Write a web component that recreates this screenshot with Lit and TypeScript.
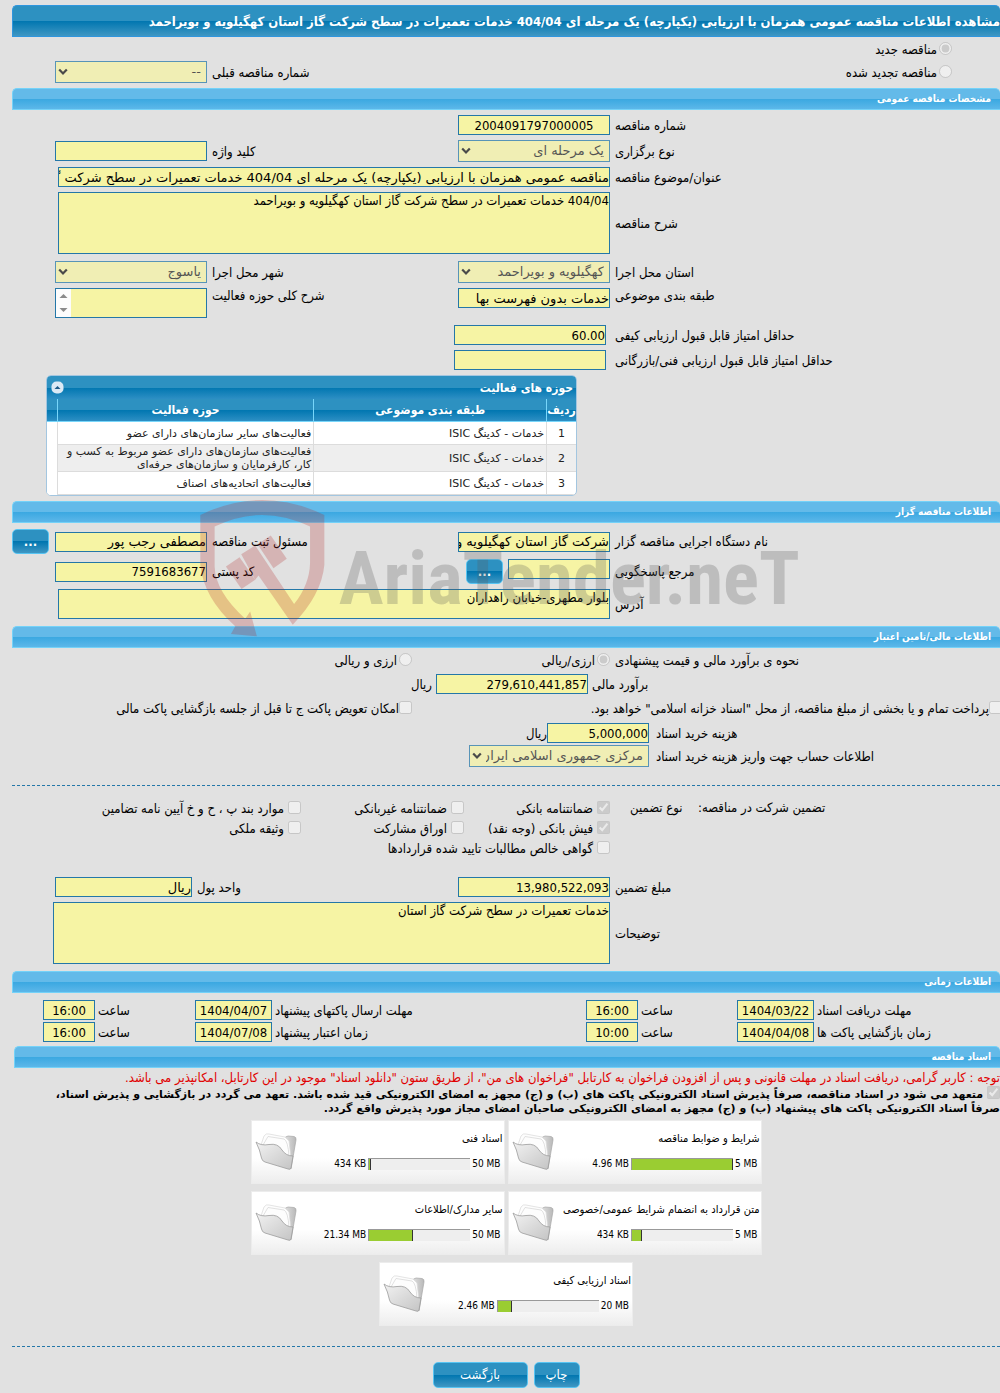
import { LitElement, html, svg, css, nothing } from "lit";
import { customElement } from "lit/decorators.js";

interface FileCard {
  title: string;
  used: string;
  limit: string;
  percent: number;
}

const FILES: FileCard[] = [
  { title: "شرایط و ضوابط مناقصه", used: "4.96 MB", limit: "5 MB", percent: 100 },
  { title: "اسناد فنی", used: "434 KB", limit: "50 MB", percent: 2 },
  { title: "متن قرارداد به انضمام شرایط عمومی/خصوصی", used: "434 KB", limit: "5 MB", percent: 10 },
  { title: "سایر مدارک/اطلاعات", used: "21.34 MB", limit: "50 MB", percent: 43 },
  { title: "اسناد ارزیابی کیفی", used: "2.46 MB", limit: "20 MB", percent: 14 },
];

const ACTIVITIES = [
  { group: "خدمات - کدینگ ISIC", name: "فعالیت‌های سایر سازمان‌های دارای عضو" },
  {
    group: "خدمات - کدینگ ISIC",
    name: "فعالیت‌های سازمان‌های دارای عضو مربوط به کسب و کار، کارفرمایان و سازمان‌های حرفه‌ای",
  },
  { group: "خدمات - کدینگ ISIC", name: "فعالیت‌های اتحادیه‌های اصناف" },
];

const DATES = [
  [
    { id: "doc", label: "مهلت دریافت اسناد", date: "1404/03/22", hour: "16:00" },
    { id: "send", label: "مهلت ارسال پاکتهای پیشنهاد", date: "1404/04/07", hour: "16:00" },
  ],
  [
    { id: "open", label: "زمان بازگشایی پاکت ها", date: "1404/04/08", hour: "10:00" },
    { id: "valid", label: "زمان اعتبار پیشنهاد", date: "1404/07/08", hour: "16:00" },
  ],
];

const folder = svg`
  <svg class="folder" viewBox="0 0 42 40" aria-hidden="true">
    <defs>
      <linearGradient id="front" x1="0" y1="0" x2="1" y2="1">
        <stop offset="0" stop-color="#f2f2f2" /><stop offset="1" stop-color="#c4c4c4" />
      </linearGradient>
      <linearGradient id="back" x1="0" y1="0" x2="1" y2="0">
        <stop offset="0" stop-color="#e6e6e6" /><stop offset="1" stop-color="#b8b8b8" />
      </linearGradient>
    </defs>
    <path d="M28 9 Q30 4 33 4 L39 4.500 Q41.500 5 41 8 L36 37 L30 33 Z" fill="url(#back)" stroke="#a8a8a8" stroke-width=".7" />
    <path d="M6 13 L9 4 Q11 1 14 2 L30 5 L34 9 L36 26 L20 24 Z" fill="#fdfdfd" stroke="#d8d8d8" stroke-width=".7" />
    <path d="M8 13 L13 4.500 L29 7 Q33 9 34 24" fill="none" stroke="#d4d4d4" stroke-width=".7" />
    <path d="M1 10 Q6 14 14 12.500 Q23 11 27 18 Q31 24 38 24 L36 36 Q35.500 38 33 37 L10 30 Q7 29 6.500 26 Q5 18 1 10 Z" fill="url(#front)" stroke="#9c9c9c" stroke-width=".8" />
  </svg>`;

@customElement("app-root")
export class AppRoot extends LitElement {
  static styles = css`
    :host {
      display: block;
      overflow: hidden;
      background: #e1e1e1;
      color: #000;
      font-family: "DejaVu Sans Condensed", "DejaVu Sans", sans-serif;
      font-size: 13px;
      line-height: 14px;
    }
    * { box-sizing: border-box; }
    .page { padding: 5px 0 5px 12px; }
    h1, h2, h3, p { margin: 0; }

    .title {
      height: 32px;
      padding-top: 8px;
      border: 1px solid #2f96de;
      border-width: 1px 0 1px 1px;
      border-radius: 5px 5px 0 0;
      background: linear-gradient(#2d91c1 0 50%, #0076b0 50%, #3f97c3);
      color: #fff;
      font-size: 13px;
      line-height: 16px;
      white-space: nowrap;
    }
    .bar {
      height: 22px;
      margin-top: 7px;
      padding: 3px 9px 0;
      border: 1px solid #74d2f8;
      border-width: 1px 0 1px 1px;
      border-radius: 5px 5px 0 0;
      background: linear-gradient(#63bae9 0 50%, #3aa8e1 50%, #5cb7e9);
      color: #fff;
      font-size: 10px;
      line-height: 14px;
    }
    .bar.tight { margin-top: 5px; }
    .bar.inset { margin: 4px 0 0 2px; }

    .stack { display: flex; flex-direction: column; gap: 5px; padding-top: 5px; }
    .head { gap: 4px; }
    .row {
      display: grid;
      grid-template-columns: 385fr 152px 241fr 152px 38fr;
      column-gap: 5px;
      align-items: center;
    }
    .row.top { align-items: start; }
    .lbl { text-align: end; padding-top: 1px; white-space: nowrap; }
    .c3 { grid-column: 3; }
    .spaced { padding-top: 2px; }

    input.box, textarea, select, .scrollbox {
      width: 100%;
      min-width: 0;
      height: 20px;
      margin: 0;
      padding: 0;
      border: 1px solid #2477a8;
      border-radius: 0;
      outline: 0;
      background: #f6f4a4;
      color: #000;
      font-family: "DejaVu Sans", sans-serif;
      font-size: 13px;
      line-height: 16px;
    }
    input.num, input.mid, textarea { font-family: "DejaVu Sans Condensed", "DejaVu Sans", sans-serif; }
    input.num { direction: ltr; text-align: right; }
    input.mid { direction: ltr; text-align: center; }
    textarea { display: block; resize: none; overflow: hidden; }
    textarea.tall { height: 62px; }
    textarea.low { height: 30px; }
    input.wide, textarea.wide, textarea.full { grid-column: 2 / span 3; width: auto; }
    input.box.wide, textarea.wide { margin-inline-end: 3px; }
    input.wide { justify-self: stretch; }
    textarea.full { margin-inline-end: -2px; }
    input.box.nudge { margin-right: 4px; }

    .scrollbox { display: flex; height: 30px; }
    .scrollbox textarea { flex: 1; height: 28px; border: 0; }
    .scrollbox svg { flex: none; width: 15px; height: 28px; background: #fcfcfc; }

    .pick { position: relative; display: block; height: 22px; opacity: .72; }
    .pick select {
      appearance: none;
      height: 22px;
      padding: 0 5px 0 16px;
      opacity: 1;
      color: #1c1c1c;
    }
    .pick svg { position: absolute; left: 3px; top: 7px; width: 10px; height: 8px; pointer-events: none; }

    input[type="radio"], input[type="checkbox"] {
      flex: none;
      width: 13px;
      height: 13px;
      margin: 0;
    }
    .opt { display: flex; align-items: flex-start; gap: 2px; white-space: nowrap; }
    .opt span { padding-top: 1px; }
    .opt.far { gap: 4px; }
    .opt.near { gap: 0; }
    .side { padding-inline-start: 48px; }

    .btn {
      border: 1px solid #56c4f2;
      border-radius: 5px;
      background: linear-gradient(#2d91c1 0 50%, #0076b0 50%, #3f97c3);
      color: #fff;
      font-family: inherit;
      font-size: 13px;
      line-height: 16px;
      padding: 0;
    }
    .dots { width: 37px; height: 25px; justify-self: end; font-weight: bold; }

    .grid {
      width: 54%;
      max-width: 531px;
      margin: 0 auto 0 34px;
      border: 1px solid #a3c6e0;
      border-radius: 5px;
      overflow: hidden;
      background: #fff;
    }
    .gridhead {
      display: flex;
      align-items: center;
      justify-content: space-between;
      height: 23px;
      padding: 0 3px 0 4px;
      background: linear-gradient(#2d91c1 0 50%, #0076b0 50%, #2d8fc4);
      color: #fff;
      font-size: 12px;
    }
    .gridhead h3 { font-size: inherit; }
    .fold { width: 13px; height: 13px; padding: 0; border: 0; background: none; display: flex; }
    .fold svg { width: 13px; height: 13px; }
    table { width: 100%; border-collapse: separate; border-spacing: 0; table-layout: fixed; font-size: 11px; line-height: 13px; }
    th {
      height: 23px;
      padding: 0;
      border-inline-end: 1px solid #78d6fa;
      border-bottom: 1px solid #78d6fa;
      background: linear-gradient(#2d91c1 0 50%, #0076b0 50%, #2d8fc4);
      color: #fff;
      font-size: 12px;
    }
    td {
      height: 23px;
      padding: 0 2px;
      border-inline-end: 1px solid #dcdcdc;
      border-bottom: 1px solid #dcdcdc;
      color: #222;
      font-family: "DejaVu Sans", sans-serif;
    }
    tbody tr:nth-child(even) td { background: #eee; }
    tbody tr td:last-child { background: #fff; border: 0; }
    th:last-child { border-inline-end: 0; }
    td.no { text-align: center; }
    .w1 { width: 30px; }
    .w2 { width: 44%; }
    .w4 { width: 10px; }

    .owner { position: relative; }
    .owner .stack { padding-top: 6px; }
    .mark { position: absolute; left: 19%; top: -6px; display: flex; align-items: flex-start; pointer-events: none; direction: ltr; }
    .mark svg { width: 127px; height: 143px; }
    .mark span {
      margin: 38px 0 0 12px;
      color: rgba(90, 90, 90, .26);
      font-family: "Roboto Condensed", Roboto, sans-serif;
      font-size: 75px;
      font-weight: bold;
      line-height: 90px;
      white-space: nowrap;
    }
    .minor { display: flex; gap: 5px; align-items: flex-start; height: 25px; padding-inline-end: 8px; }
    .minor .btn { flex: none; }

    .pay { display: grid; grid-template-columns: 385fr 193fr 400fr; column-gap: 5px; height: 16px; }
    .pay .both { grid-column: 1 / span 2; margin-inline-start: -2px; }
    .est { display: grid; grid-template-columns: 408fr 152px 420fr; column-gap: 4px; align-items: center; }
    .cost { display: grid; grid-template-columns: 344fr 102px 528fr; column-gap: 7px; align-items: center; padding-top: 3px; }
    .cost.acc { grid-template-columns: 344fr 180px 450fr; padding-top: 0; margin-top: -3px; }
    .cost .unit { margin-inline-start: -7px; }
    .unit { padding-top: 1px; }
    .dash { margin: 0; border: 0; border-top: 1px dashed #2477a8; }
    .cut { margin-top: 18px; }

    .guar {
      display: grid;
      grid-template-columns: 302fr 88fr 146fr 163fr 289fr;
      grid-auto-rows: 20px;
      margin: 15px 0 11px;
    }
    .guar .kind { padding-inline-end: 20px; }
    .guar .sum, .guar .kind { text-align: end; white-space: nowrap; }
    .guar .first { grid-column: 3; }
    .guar .lone { grid-column: 3 / span 2; }
    input.box.money { width: 137px; justify-self: end; }
    .moneylbl { margin-inline-end: -15px; }

    .dates {
      display: grid;
      grid-template-columns: 183fr 77px 93fr 52px 308fr 77px 94fr 52px 28fr;
      gap: 2px 3px;
      align-items: center;
      padding-top: 7px;
    }
    .red { color: #e00000; padding-top: 3px; white-space: nowrap; }
    .pledge { display: block; padding-top: 1px; font-family: "DejaVu Sans", sans-serif; font-weight: bold; font-size: 11px; white-space: nowrap; }
    .pledge input { vertical-align: -1px; }

    .files { display: flex; flex-wrap: wrap; justify-content: center; gap: 7px 3px; width: 53%; min-width: 515px; margin: 4px auto 20px; }
    .card {
      display: flex;
      flex-direction: row-reverse;
      width: 254px;
      height: 64px;
      padding: 0 1px 0 3px;
      border: 1px solid #ececec;
      background: linear-gradient(#fff 60%, #ededed);
      color: #000;
      font-size: 10px;
      line-height: 12px;
    }
    .folder { flex: none; width: 42px; height: 40px; margin-top: 11px; }
    .info { flex: 1; min-width: 0; padding-top: 12px; }
    .name { display: block; font-size: 11px; white-space: nowrap; }
    .usage { display: flex; align-items: center; gap: 2px; margin-top: 13px; padding-inline-start: 2px; }
    .usage span { direction: ltr; }
    .gauge { width: 102px; height: 12px; border-top: 1px solid #999; border-left: 1px solid #999; background: #eee; direction: ltr; }
    .level { height: 100%; background: #9acd32; border-right: 1px solid #333; }

    .actions { display: flex; justify-content: center; gap: 6px; padding-top: 15px; }
    .print { width: 46px; height: 26px; }
    .back { width: 95px; height: 26px; }
  `;

  private select(id: string, value: string) {
    return html`<span class="pick">
      <select id=${id} disabled><option selected>${value}</option></select>
      <svg viewBox="0 0 10 8" aria-hidden="true"><path d="M1.200 1.500 L5 5.500 L8.800 1.500" fill="none" stroke="#111" stroke-width="2.200" /></svg>
    </span>`;
  }

  private label(id: string, text: string, extra = "") {
    return html`<label class="lbl ${extra}" for=${id}>${text}</label>`;
  }

  private input(id: string, value: string, extra = "") {
    return html`<input class="box ${extra}" id=${id} type="text" readonly .value=${value} />`;
  }

  private option(type: "radio" | "checkbox", text: string, checked = false, extra = "", name = "") {
    return html`<label class="opt ${extra}">
      <input type=${type} name=${name || nothing} ?checked=${checked} disabled /><span>${text}</span>
    </label>`;
  }

  private activities() {
    return html`<section class="grid">
      <div class="gridhead">
        <h3>حوزه های فعالیت</h3>
        <button class="fold" aria-label="جمع کردن">
          <svg viewBox="0 0 13 13" aria-hidden="true">
            <rect x=".5" y=".5" width="12" height="12" rx="5" fill="#dbe9f5" /><path d="M3.500 8 L6.500 5 L9.500 8 Z" fill="#1d5987" />
          </svg>
        </button>
      </div>
      <table>
        <thead>
          <tr><th class="w1">ردیف</th><th class="w2">طبقه بندی موضوعی</th><th>حوزه فعالیت</th><th class="w4"></th></tr>
        </thead>
        <tbody>
          ${ACTIVITIES.map(
            (a, i) => html`<tr><td class="no">${i + 1}</td><td>${a.group}</td><td>${a.name}</td><td></td></tr>`
          )}
        </tbody>
      </table>
    </section>`;
  }

  private card(f: FileCard) {
    return html`<article class="card">
      ${folder}
      <div class="info">
        <span class="name">${f.title}</span>
        <div class="usage">
          <span>${f.limit}</span>
          <div class="gauge"><div class="level" style="width:${f.percent}%"></div></div>
          <span>${f.used}</span>
        </div>
      </div>
    </article>`;
  }

  render() {
    return html`<main class="page" dir="rtl" lang="fa">
      <h1 class="title">مشاهده اطلاعات مناقصه عمومی همزمان با ارزیابی (یکپارچه) یک مرحله ای 404/04 خدمات تعمیرات در سطح شرکت گاز استان کهگیلویه و بویراحمد</h1>

      <div class="stack head">
        <div class="side">${this.option("radio", "مناقصه جدید", true, "", "kind")}</div>
        <div class="row">
          <div class="side">${this.option("radio", "مناقصه تجدید شده", false, "", "kind")}</div>
          ${this.label("prev", "شماره مناقصه قبلی", "c3")} ${this.select("prev", "--")}
        </div>
      </div>

      <h2 class="bar tight">مشخصات مناقصه عمومی</h2>
      <div class="stack">
        <div class="row">${this.label("number", "شماره مناقصه")} ${this.input("number", "2004091797000005", "mid")}</div>
        <div class="row">
          ${this.label("type", "نوع برگزاری")} ${this.select("type", "یک مرحله ای")}
          ${this.label("key", "کلید واژه")} ${this.input("key", "")}
        </div>
        <div class="row">
          ${this.label("subject", "عنوان/موضوع مناقصه")}
          ${this.input("subject", "مناقصه عمومی همزمان با ارزیابی (یکپارچه) یک مرحله ای 404/04 خدمات تعمیرات در سطح شرکت گاز استان کهگیلویه و بویراحمد", "wide")}
        </div>
        <div class="row">
          ${this.label("desc", "شرح مناقصه")}
          <textarea class="tall wide" id="desc" readonly .value=${"404/04 خدمات تعمیرات در سطح شرکت گاز استان کهگیلویه و بویراحمد"}></textarea>
        </div>
        <div class="row spaced">
          ${this.label("state", "استان محل اجرا")} ${this.select("state", "کهگیلویه و بویراحمد")}
          ${this.label("city", "شهر محل اجرا")} ${this.select("city", "یاسوج")}
        </div>
        <div class="row top">
          ${this.label("class", "طبقه بندی موضوعی")} ${this.input("class", "خدمات بدون فهرست بها")}
          ${this.label("field", "شرح کلی حوزه فعالیت")}
          <div class="scrollbox">
            <textarea id="field" readonly></textarea>
            <svg viewBox="0 0 15 28" aria-hidden="true"><path d="M3.500 9 L7.500 5 L11.500 9 Z M3.500 19 L7.500 23 L11.500 19 Z" fill="#8a8a8a" /></svg>
          </div>
        </div>
        <div class="row spaced">${this.label("q1", "حداقل امتیاز قابل قبول ارزیابی کیفی")} ${this.input("q1", "60.00", "num nudge")}</div>
        <div class="row">${this.label("q2", "حداقل امتیاز قابل قبول ارزیابی فنی/بازرگانی")} ${this.input("q2", "", "num nudge")}</div>
        ${this.activities()}
      </div>

      <div class="owner">
        <h2 class="bar tight">اطلاعات مناقصه گزار</h2>
        <div class="stack">
          <div class="row">
            ${this.label("org", "نام دستگاه اجرایی مناقصه گزار")} ${this.input("org", "شرکت گاز استان کهگیلویه و بویراحمد")}
            ${this.label("who", "مسئول ثبت مناقصه")} ${this.input("who", "مصطفی رجب پور")}
            <button class="btn dots">...</button>
          </div>
          <div class="row">
            ${this.label("ref", "مرجع پاسخگویی")}
            <div class="minor">${this.input("ref", "")}<button class="btn dots">...</button></div>
            ${this.label("zip", "کد پستی")} ${this.input("zip", "7591683677", "num")}
          </div>
          <div class="row">
            ${this.label("addr", "آدرس")}
            <textarea class="low wide" id="addr" readonly .value=${"بلوار مطهری-خیابان راهداران"}></textarea>
          </div>
        </div>
        <div class="mark" aria-hidden="true">
          <svg viewBox="600 0 380 430">
            <g fill="#b02424" fill-opacity=".24">
              <path d="M600 60 Q785 -30 973 60 V210 Q965 300 878 390 L775 242 L765 255 L723 178 L765 152 L882 328 Q928 270 930 205 V95 Q785 25 643 95 V215 Q645 290 735 372 L750 350 L770 425 L692 418 L705 395 Q610 310 600 210 Z" />
              <path d="M677 215 L718 187 L765 255 L724 283 Z" />
              <path d="M772 148 L812 122 L860 192 L820 220 Z" />
            </g>
          </svg>
          <span>AriaTender.neT</span>
        </div>
      </div>

      <h2 class="bar">اطلاعات مالی/تامین اعتبار</h2>
      <div class="stack">
        <div class="pay">
          <span class="lbl">نحوه ی برآورد مالی و قیمت پیشنهادی</span>
          ${this.option("radio", "ارزی/ریالی", true, "", "cur")} ${this.option("radio", "ارزی و ریالی", false, "", "cur")}
        </div>
        <div class="est">${this.label("est", "برآورد مالی")} ${this.input("est", "279,610,441,857", "num")}<span class="unit">ریال</span></div>
        <div class="pay spaced">
          ${this.option("checkbox", "پرداخت تمام و یا بخشی از مبلغ مناقصه، از محل \"اسناد خزانه اسلامی\" خواهد بود.", false, "near both")}
          ${this.option("checkbox", "امکان تعویض پاکت ج تا قبل از جلسه بازگشایی پاکت مالی", false, "near")}
        </div>
        <div class="cost">${this.label("cost", "هزینه خرید اسناد")} ${this.input("cost", "5,000,000", "num")}<span class="unit">ریال</span></div>
        <div class="cost acc">${this.label("acc", "اطلاعات حساب جهت واریز هزینه خرید اسناد")} ${this.select("acc", "مرکزی جمهوری اسلامی ایران")}</div>
      </div>
      <hr class="dash cut" />
      <div class="guar">
        <span class="sum">تضمین شرکت در مناقصه:</span>
        <span class="kind">نوع تضمین</span>
        ${this.option("checkbox", "ضمانتنامه بانکی", true, "far first")}
        ${this.option("checkbox", "ضمانتنامه غیربانکی", false, "far")}
        ${this.option("checkbox", "موارد بند پ ، ح و خ آیین نامه تضامین", false, "far")}
        ${this.option("checkbox", "فیش بانکی (وجه نقد)", true, "far first")}
        ${this.option("checkbox", "اوراق مشارکت", false, "far")}
        ${this.option("checkbox", "وثیقه ملکی", false, "far")}
        ${this.option("checkbox", "گواهی خالص مطالبات تایید شده قراردادها", false, "far lone")}
      </div>
      <div class="stack">
        <div class="row">
          ${this.label("amount", "مبلغ تضمین")} ${this.input("amount", "13,980,522,093", "num")}
          ${this.label("unit", "واحد پول", "moneylbl")} ${this.input("unit", "ریال", "money")}
        </div>
        <div class="row">
          ${this.label("notes", "توضیحات")}
          <textarea class="tall full" id="notes" readonly .value=${"خدمات تعمیرات در سطح شرکت گاز استان"}></textarea>
        </div>
      </div>

      <h2 class="bar">اطلاعات زمانی</h2>
      <div class="dates">
        ${DATES.map((line) =>
          line.map(
            (d, i) => html`${this.label(d.id, d.label)} ${this.input(d.id, d.date, "mid")}
              ${this.label(d.id + "-h", "ساعت")} ${this.input(d.id + "-h", d.hour, "mid")}${i === 1 ? html`<span></span>` : nothing}`
          )
        )}
      </div>

      <h2 class="bar inset">اسناد مناقصه</h2>
      <p class="red">توجه : کاربر گرامی، دریافت اسناد در مهلت قانونی و پس از افزودن فراخوان به کارتابل "فراخوان های من"، از طریق ستون "دانلود اسناد" موجود در این کارتابل، امکانپذیر می باشد.</p>
      <label class="pledge"><input type="checkbox" checked disabled /> متعهد می شود در اسناد مناقصه، صرفاً پذیرش اسناد الکترونیکی پاکت های (ب) و (ج) مجهز به امضای الکترونیکی قید شده باشد. تعهد می گردد در بازگشایی و پذیرش اسناد،<br />صرفاً اسناد الکترونیکی پاکت های پیشنهاد (ب) و (ج) مجهز به امضای الکترونیکی صاحبان امضای مجاز مورد پذیرش واقع گردد.</label>

      <div class="files">${FILES.map((f) => this.card(f))}</div>
      <hr class="dash" />
      <div class="actions">
        <button class="btn print">چاپ</button>
        <button class="btn back">بازگشت</button>
      </div>
    </main>`;
  }
}
